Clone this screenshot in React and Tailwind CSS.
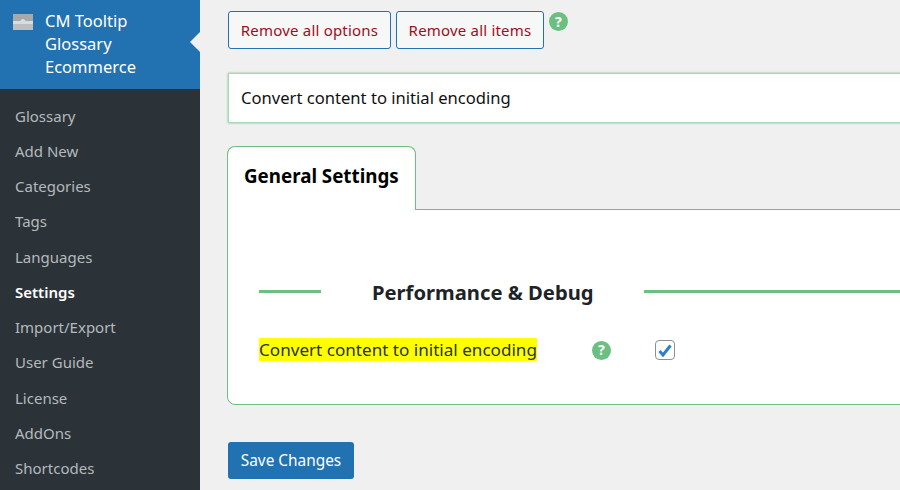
const menuItems = [
  "Glossary",
  "Add New",
  "Categories",
  "Tags",
  "Languages",
  "Settings",
  "Import/Export",
  "User Guide",
  "License",
  "AddOns",
  "Shortcodes",
];

function HelpIcon({ className = "" }) {
  return (
    <span
      className={`flex h-[19px] w-[19px] shrink-0 items-center justify-center rounded-full bg-[#6bbf80] text-[14px] leading-none font-extrabold text-[#f4f4f4] ${className}`}
    >
      ?
    </span>
  );
}

function Sidebar() {
  return (
    <aside className="h-full w-[200px] shrink-0 bg-[#2c3338]">
      <div className="relative flex h-[89px] bg-[#2271b1] pt-[9px] pl-[13px]">
        <svg width="20" height="16" viewBox="0 0 20 16" className="mt-[5px] shrink-0">
          <rect x="0" y="0" width="20" height="7" fill="#a6a8aa" />
          <rect x="0" y="7" width="20" height="3" fill="#d5dde3" />
          <rect x="0" y="10" width="20" height="6" fill="#bcbfc1" />
          <path d="M7 7.500l2-2.500h2l2 2.500z" fill="#d5dde3" />
        </svg>
        <div className="ml-[12px] text-[16.500px] leading-[23px] text-white">
          CM Tooltip
          <br />
          Glossary
          <br />
          Ecommerce
        </div>
        <span className="absolute top-[32px] right-0 h-0 w-0 border-y-[10px] border-r-[10px] border-y-transparent border-r-[#f0f0f0]" />
      </div>
      <ul className="pt-[9.600px]">
        {menuItems.map((item) => (
          <li
            key={item}
            className={`h-[35.25px] pl-[15px] text-[15px] leading-[35px] ${
              item === "Settings" ? "font-semibold text-white" : "text-[#b4b9be]"
            }`}
          >
            {item}
          </li>
        ))}
      </ul>
    </aside>
  );
}

function ActionButton({ children, className = "" }) {
  return (
    <button
      className={`h-[38px] rounded-[3px] border border-[#2271b1] bg-[#f6f7f7] text-[15px] tracking-[0.2px] text-[#a00d1c] ${className}`}
    >
      {children}
    </button>
  );
}

export default function App() {
  return (
    <div className="flex h-[490px] w-[900px] overflow-hidden bg-[#f0f0f0] font-['Noto_Sans',sans-serif]">
      <Sidebar />
      <main className="min-w-0 flex-1 pt-[11px] pl-[28px]">
        <div className="flex items-start gap-[5px]">
          <ActionButton className="w-[163px]">Remove all options</ActionButton>
          <ActionButton className="w-[148px]">Remove all items</ActionButton>
          <HelpIcon className="mt-[1px]" />
        </div>

        <div className="mt-[24px] flex h-[50px] w-[700px] items-center border border-[#a9dab5] bg-white pl-[12px] text-[16.600px] text-[#111] shadow-[0_0_2px_#6bbf80]">
          Convert content to initial encoding
        </div>

        <div className="mt-[23px] -ml-px">
          <div className="relative z-10 -mb-px flex h-[64px] w-[189px] rounded-t-[8px] border border-b-0 border-[#6bbf80] bg-white pt-[15px] pl-[16px] text-[18.750px] font-bold text-black">
            General Settings
          </div>
          <div className="h-[196px] w-[720px] rounded-bl-[8px] border border-[#6bbf80] bg-white pt-[60px] pl-[31px]">
            <div className="flex h-[44px] items-center">
              <span className="h-[3px] w-[62px] -translate-y-px bg-[#6bbf80]" />
              <h3 className="ml-[51px] text-[20.200px] font-bold text-[#1d2327]">Performance &amp; Debug</h3>
              <span className="ml-[50px] h-[3px] flex-1 -translate-y-px bg-[#6bbf80]" />
            </div>
            <div className="mt-[24px] flex items-center">
              <span className="w-[333px]">
                <span className="bg-[#ffff00] text-[17.100px] leading-[23px] text-[#2c3338]">
                  Convert content to initial encoding
                </span>
              </span>
              <HelpIcon />
              <span className="ml-[44px] flex h-[20px] w-[20px] items-center justify-center rounded-[4px] border border-[#8c8f94] bg-white">
                <svg width="14" height="13" viewBox="0 0 14 13">
                  <path d="M1.500 7l3.500 4 7.500-9.500" fill="none" stroke="#2f7fc8" strokeWidth="3" />
                </svg>
              </span>
            </div>
          </div>
        </div>

        <button className="mt-[37px] h-[37px] w-[126px] rounded-[3px] bg-[#2271b1] text-[15.400px] text-white">
          Save Changes
        </button>
      </main>
    </div>
  );
}
